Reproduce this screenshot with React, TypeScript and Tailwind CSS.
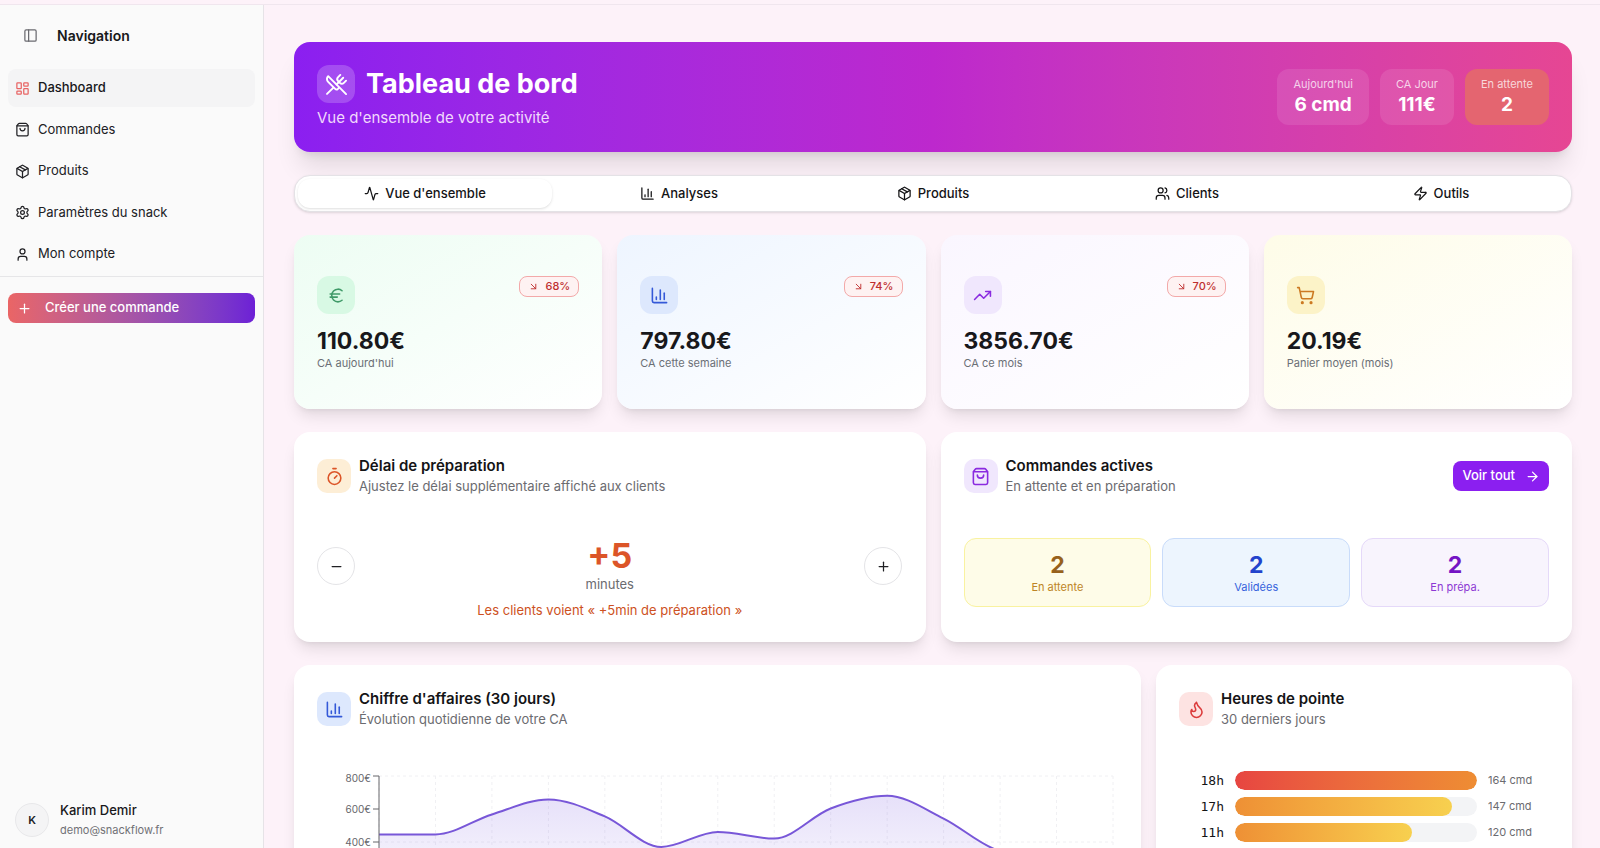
import {
  Activity,
  ArrowDownRight,
  ArrowRight,
  ChartColumn,
  Euro,
  Flame,
  LayoutDashboard,
  type LucideIcon,
  Minus,
  Package,
  PanelLeft,
  Plus,
  Settings,
  ShoppingBag,
  ShoppingCart,
  Timer,
  TrendingUp,
  User,
  Users,
  UtensilsCrossed,
  Zap,
} from 'lucide-react';
import { type ReactNode, useState } from 'react';

const navItems: { label: string; icon: LucideIcon }[] = [
  { label: 'Dashboard', icon: LayoutDashboard },
  { label: 'Commandes', icon: ShoppingBag },
  { label: 'Produits', icon: Package },
  { label: 'Paramètres du snack', icon: Settings },
  { label: 'Mon compte', icon: User },
];

const tabs: { label: string; icon: LucideIcon }[] = [
  { label: "Vue d'ensemble", icon: Activity },
  { label: 'Analyses', icon: ChartColumn },
  { label: 'Produits', icon: Package },
  { label: 'Clients', icon: Users },
  { label: 'Outils', icon: Zap },
];

const headerStats = [
  { label: "Aujourd'hui", value: '6 cmd', box: 'bg-white/10' },
  { label: 'CA Jour', value: '111€', box: 'bg-white/10' },
  { label: 'En attente', value: '2', box: 'bg-[#e46570]' },
];

const kpis = [
  {
    label: "CA aujourd'hui",
    value: '110.80€',
    trend: '68%',
    icon: Euro,
    card: 'from-[#edfdf3]',
    tile: 'bg-[#d8f9e4] text-[#3f9a68]',
  },
  {
    label: 'CA cette semaine',
    value: '797.80€',
    trend: '74%',
    icon: ChartColumn,
    card: 'from-[#eef5ff]',
    tile: 'bg-[#dde8fd] text-[#3459d8]',
  },
  {
    label: 'CA ce mois',
    value: '3856.70€',
    trend: '70%',
    icon: TrendingUp,
    card: 'from-[#faf6ff]',
    tile: 'bg-[#f0e7fd] text-[#8a2be0]',
  },
  {
    label: 'Panier moyen (mois)',
    value: '20.19€',
    trend: null,
    icon: ShoppingCart,
    card: 'from-[#fefce8]',
    tile: 'bg-[#fcf3c8] text-[#cc7a22]',
  },
];

const orderStats = [
  { label: 'En attente', box: 'border-[#f9f2a0] bg-[#fefce8]', value: 'text-[#97611c]', text: 'text-[#bd8526]' },
  { label: 'Validées', box: 'border-[#c9dcfa] bg-[#edf5fe]', value: 'text-[#2343cc]', text: 'text-[#3562dc]' },
  { label: 'En prépa.', box: 'border-[#e5d9f9] bg-[#f8f4fd]', value: 'text-[#7414c4]', text: 'text-[#8d38d4]' },
];

const peakHours = [
  { hour: '18h', count: 164, bar: 'from-[#e74541] to-[#ee8d33]' },
  { hour: '17h', count: 147, bar: 'from-[#ee9035] to-[#f7d04f]' },
  { hour: '11h', count: 120, bar: 'from-[#ee9035] to-[#f7d04f]' },
];

const revenue = [446, 446, 567, 658, 555, 370, 461, 421, 603, 680, 542, 345, 300, 320];

// Plot area inside the 801x188 chart
const plot = { left: 62, right: 796, top: 6, bottom: 138 };
const step = (plot.right - plot.left) / (revenue.length - 1);
const xAt = (index: number) => plot.left + index * step;
const yAt = (value: number) => plot.bottom - (value / 800) * (plot.bottom - plot.top);

// Monotone cubic through the points, so the line never overshoots the data
function monotonePath(values: number[]) {
  const ys = values.map(yAt);
  const slopes = ys.slice(1).map((y, i) => (y - ys[i]) / step);
  const tangents = ys.map((_, i) => {
    if (i === 0) return slopes[0];
    if (i === ys.length - 1) return slopes[i - 1];
    const [a, b] = [slopes[i - 1], slopes[i]];
    if (a * b <= 0) return 0;
    return Math.sign(a) * Math.min(Math.abs(a), Math.abs(b), Math.abs(a + b) / 4) * 2;
  });
  let d = `M${xAt(0)},${ys[0]}`;
  for (let i = 1; i < ys.length; i++) {
    const third = step / 3;
    d += `C${xAt(i - 1) + third},${ys[i - 1] + tangents[i - 1] * third} ${xAt(i) - third},${ys[i] - tangents[i] * third} ${xAt(i)},${ys[i]}`;
  }
  return d;
}

function Sidebar() {
  return (
    <aside className="flex w-[264px] shrink-0 flex-col border-r border-[#e6e3e7] bg-[#fafafa]">
      <div className="flex h-[60px] items-center pl-4">
        <button type="button" aria-label="Réduire le menu" className="flex size-7 items-center justify-center text-[#6b6b70]">
          <PanelLeft className="size-[15px]" />
        </button>
        <span className="ml-[13px] text-[14px] font-semibold text-[#18181b]">Navigation</span>
      </div>
      <nav className="border-b border-[#e6e6e8] px-2 pt-1 pb-[3px]">
        <ul className="flex h-[204px] flex-col justify-between">
          {navItems.map(({ label, icon: Icon }, i) => (
            <li key={label}>
              <a
                href="#"
                className={
                  i === 0
                    ? 'flex h-[38px] items-center gap-2 rounded-lg bg-[#f4f4f5] px-[7px] text-[13px] font-medium text-[#18181b]'
                    : 'flex h-[38px] items-center gap-2 rounded-lg px-[7px] text-[13px] text-[#202024]'
                }
              >
                <Icon className={i === 0 ? 'size-[15px] text-[#e86464]' : 'size-[15px]'} />
                {label}
              </a>
            </li>
          ))}
        </ul>
      </nav>
      <div className="px-2 pt-4">
        <button
          type="button"
          className="flex h-[30px] w-full items-center gap-[13px] rounded-lg bg-linear-to-r from-[#ea6565] to-[#6d1fd6] pl-[9px] text-[13px] font-medium text-white"
        >
          <Plus className="size-[15px]" />
          Créer une commande
        </button>
      </div>
      <div className="mt-auto flex items-center gap-[11px] pb-2 pl-[15px]">
        <span className="flex size-[34px] items-center justify-center rounded-full border border-[#e8e8ea] bg-[#f4f4f5] text-[11px] font-semibold text-[#202024]">
          K
        </span>
        <div>
          <p className="text-[13px] leading-5 font-medium text-[#18181b]">Karim Demir</p>
          <p className="text-[11px] leading-5 text-[#717176]">demo@snackflow.fr</p>
        </div>
      </div>
    </aside>
  );
}

function Hero() {
  return (
    <header className="flex items-center justify-between rounded-2xl bg-linear-to-r from-[#8b1ff0] via-[#bd28cd] to-[#e64693] p-[23px] text-white shadow-xl">
      <div>
        <div className="flex items-center gap-[11px]">
          <span className="flex size-[38px] items-center justify-center rounded-xl bg-white/20">
            <UtensilsCrossed className="size-[23px]" />
          </span>
          <h1 className="text-[27px] leading-[34px] font-bold">Tableau de bord</h1>
        </div>
        <p className="mt-1 text-[15px] leading-[22px] text-[#f1d9fc]">Vue d'ensemble de votre activité</p>
      </div>
      <div className="flex gap-[11px]">
        {headerStats.map((stat) => (
          <div key={stat.label} className={`rounded-xl px-4 py-[7px] text-center ${stat.box}`}>
            <p className="text-[11px] leading-4 text-white/75">{stat.label}</p>
            <p className="text-[19px] leading-[26px] font-bold">{stat.value}</p>
          </div>
        ))}
      </div>
    </header>
  );
}

function TabBar() {
  return (
    <div role="tablist" className="grid grid-cols-5 rounded-2xl border border-[#e4e2e6] bg-white p-[3px] shadow-sm">
      {tabs.map(({ label, icon: Icon }, i) => (
        <button
          key={label}
          type="button"
          role="tab"
          aria-selected={i === 0}
          className={
            i === 0
              ? 'flex h-[29px] items-center justify-center gap-[6px] rounded-xl bg-white text-[13px] font-medium text-[#141416] shadow-sm'
              : 'flex h-[29px] items-center justify-center gap-[6px] rounded-xl text-[13px] font-medium text-[#141416]'
          }
        >
          <Icon className="size-[15px]" />
          {label}
        </button>
      ))}
    </div>
  );
}

function KpiCards() {
  return (
    <section className="grid grid-cols-4 gap-[15px]">
      {kpis.map(({ label, value, trend, icon: Icon, card, tile }) => (
        <div key={label} className={`rounded-2xl bg-linear-to-br to-white px-[23px] pt-[41px] pb-[38px] shadow-lg ${card}`}>
          <div className="flex items-start justify-between">
            <span className={`flex size-[38px] items-center justify-center rounded-xl ${tile}`}>
              <Icon className="size-[19px]" />
            </span>
            {trend && (
              <span className="flex h-[21px] items-center gap-[6px] rounded-lg border border-[#f3a9a9] bg-[#fef2f2] px-2 text-[11px] font-medium text-[#be2f2f]">
                <ArrowDownRight className="size-[11px]" />
                {trend}
              </span>
            )}
          </div>
          <p className="mt-3 text-[23px] leading-[30px] font-bold text-[#18181b]">{value}</p>
          <p className="text-[11px] leading-[15px] text-[#6b6f76]">{label}</p>
        </div>
      ))}
    </section>
  );
}

type PanelProps = {
  title: string;
  subtitle: string;
  icon: LucideIcon;
  tile: string;
  className?: string;
  action?: ReactNode;
  children: ReactNode;
};

function Panel({ title, subtitle, icon: Icon, tile, className = '', action, children }: PanelProps) {
  return (
    <section className={`rounded-2xl bg-white px-[23px] pt-6 pb-[22px] shadow-lg ${className}`}>
      <div className="flex items-center justify-between">
        <div className="flex items-center gap-2">
          <span className={`flex size-[34px] items-center justify-center rounded-[10px] ${tile}`}>
            <Icon className="size-[19px]" />
          </span>
          <div>
            <h2 className="text-[15px] leading-5 font-semibold text-[#141416]">{title}</h2>
            <p className="text-[13px] leading-5 text-[#6b6b70]">{subtitle}</p>
          </div>
        </div>
        {action}
      </div>
      {children}
    </section>
  );
}

function PrepDelay() {
  const [delay, setDelay] = useState(5);
  const roundButton = 'flex size-[38px] items-center justify-center rounded-full border border-[#e4e4e7] bg-white text-[#202024]';

  return (
    <Panel
      title="Délai de préparation"
      subtitle="Ajustez le délai supplémentaire affiché aux clients"
      icon={Timer}
      tile="bg-[#fdeed6] text-[#dc5528]"
    >
      <div className="mt-[42px] flex items-center justify-between">
        <button type="button" aria-label="Diminuer" className={roundButton} onClick={() => setDelay(Math.max(0, delay - 5))}>
          <Minus className="size-[15px]" />
        </button>
        <div className="text-center">
          <p className="text-[34px] leading-9 font-bold text-[#dc5528]">+{delay}</p>
          <p className="text-[13px] leading-5 text-[#6b6b70]">minutes</p>
        </div>
        <button type="button" aria-label="Augmenter" className={roundButton} onClick={() => setDelay(delay + 5)}>
          <Plus className="size-[15px]" />
        </button>
      </div>
      <p className="mt-[6px] text-center text-[13px] leading-5 text-[#cd5122]">
        Les clients voient « +{delay}min de préparation »
      </p>
    </Panel>
  );
}

function ActiveOrders() {
  return (
    <Panel
      title="Commandes actives"
      subtitle="En attente et en préparation"
      icon={ShoppingBag}
      tile="bg-[#f0e7fd] text-[#8a2be0]"
      action={
        <button type="button" className="flex h-[30px] items-center gap-[10px] rounded-lg bg-[#8b1ff0] px-[9px] text-[13px] font-medium text-white">
          Voir tout
          <ArrowRight className="size-[15px]" />
        </button>
      }
    >
      <div className="mt-[42px] grid grid-cols-3 gap-[11px]">
        {orderStats.map((stat) => (
          <div key={stat.label} className={`rounded-xl border px-3 py-[11px] text-center ${stat.box}`}>
            <p className={`text-[23px] leading-[30px] font-bold ${stat.value}`}>2</p>
            <p className={`text-[11px] leading-[15px] ${stat.text}`}>{stat.label}</p>
          </div>
        ))}
      </div>
    </Panel>
  );
}

function RevenueChart() {
  const line = monotonePath(revenue);

  return (
    <Panel
      title="Chiffre d'affaires (30 jours)"
      subtitle="Évolution quotidienne de votre CA"
      icon={ChartColumn}
      tile="bg-[#dde8fd] text-[#3459d8]"
      className="col-span-2"
    >
      <svg viewBox="0 0 801 188" className="mt-[41px] w-full" role="img" aria-label="Chiffre d'affaires par jour">
        <defs>
          <linearGradient id="revenue-fill" x1="0" y1="0" x2="0" y2="1">
            <stop offset="5%" stopColor="#7c5ce0" stopOpacity="0.18" />
            <stop offset="95%" stopColor="#7c5ce0" stopOpacity="0.02" />
          </linearGradient>
        </defs>
        <g stroke="#f0f0f3" strokeDasharray="3 3">
          {[800, 400, 0].map((v) => (
            <line key={v} x1={plot.left} x2={plot.right} y1={yAt(v)} y2={yAt(v)} />
          ))}
          {revenue.map((_, i) => (
            <line key={i} x1={xAt(i)} x2={xAt(i)} y1={plot.top} y2={plot.bottom} />
          ))}
        </g>
        <path d={`${line}L${plot.right},${plot.bottom}L${plot.left},${plot.bottom}Z`} fill="url(#revenue-fill)" />
        <path d={line} fill="none" stroke="#7857d8" strokeWidth="2" />
        <g stroke="#66666b">
          <line x1={plot.left} x2={plot.left} y1={plot.top} y2={plot.bottom} />
          {[800, 600, 400].map((v) => (
            <line key={v} x1={plot.left - 6} x2={plot.left} y1={yAt(v)} y2={yAt(v)} />
          ))}
        </g>
        <g fill="#66666b" fontSize="10" textAnchor="end">
          {[800, 600, 400].map((v) => (
            <text key={v} x={plot.left - 8} y={yAt(v) + (v === 800 ? 6 : 4)}>
              {v}€
            </text>
          ))}
        </g>
      </svg>
    </Panel>
  );
}

function PeakHours() {
  return (
    <Panel title="Heures de pointe" subtitle="30 derniers jours" icon={Flame} tile="bg-[#fde3e2] text-[#dc3c3c]">
      <ul className="mt-[42px] flex flex-col gap-[7px]">
        {peakHours.map(({ hour, count, bar }) => (
          <li key={hour} className="flex h-[19px] items-center gap-[11px]">
            <span className="w-[45px] text-right font-['DejaVu_Sans_Mono',monospace] text-[13px] text-[#141416]">{hour}</span>
            <span className="h-full flex-1 overflow-hidden rounded-full bg-[#f3f4f6]">
              <span className={`block h-full rounded-full bg-linear-to-r ${bar}`} style={{ width: `${(count / 164) * 100}%` }} />
            </span>
            <span className="w-[61px] text-[11px] text-[#6b6b70]">{count} cmd</span>
          </li>
        ))}
      </ul>
    </Panel>
  );
}

export default function App() {
  return (
    <div className="flex h-screen flex-col overflow-hidden bg-[#fdf2f9] font-['Inter','Liberation_Sans',sans-serif]">
      <div className="h-[5px] shrink-0 border-b border-[#f0e6ee]" />
      <div className="flex min-h-0 flex-1">
        <Sidebar />
        <main className="min-w-0 flex-1 overflow-y-auto pt-[37px] pr-7 pb-8 pl-[30px] [scrollbar-width:none]">
          <div className="flex flex-col gap-[23px]">
            <Hero />
            <TabBar />
            <KpiCards />
            <div className="grid grid-cols-2 gap-[15px]">
              <PrepDelay />
              <ActiveOrders />
            </div>
            <div className="grid grid-cols-3 gap-[15px]">
              <RevenueChart />
              <PeakHours />
            </div>
          </div>
        </main>
      </div>
    </div>
  );
}
